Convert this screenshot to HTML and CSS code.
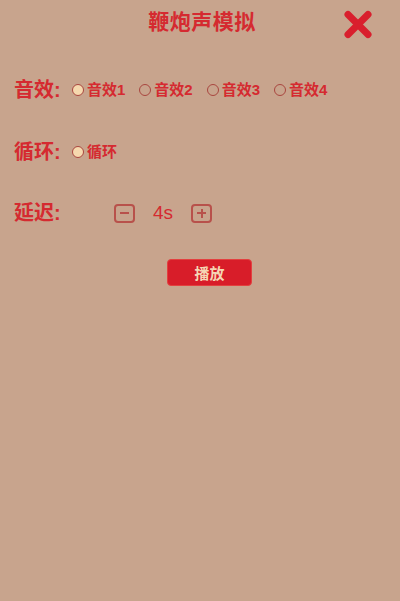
FILE: index.html
```html
<!DOCTYPE html>
<html lang="zh">
<head>
<meta charset="utf-8">
<title>鞭炮声模拟</title>
<link rel="stylesheet" href="styles.css">
</head>
<body>
<div class="page">
  <header class="header">
    <span class="spacer"></span>
    <h1 class="title">鞭炮声模拟</h1>
    <button class="close" aria-label="关闭">
      <svg width="30" height="29" viewBox="0 0 30 29"><path d="M5 4.5 L25 24.5 M25 4.5 L5 24.5" stroke="#d91f2d" stroke-width="7" stroke-linecap="round" fill="none"/></svg>
    </button>
  </header>

  <div class="row row-sound">
    <span class="label">音效:</span>
    <div class="options">
      <label class="opt"><span class="radio on"></span><span class="opt-text">音效1</span></label>
      <label class="opt"><span class="radio"></span><span class="opt-text">音效2</span></label>
      <label class="opt"><span class="radio"></span><span class="opt-text">音效3</span></label>
      <label class="opt"><span class="radio"></span><span class="opt-text">音效4</span></label>
    </div>
  </div>

  <div class="row row-loop">
    <span class="label">循环:</span>
    <div class="options">
      <label class="opt"><span class="radio on"></span><span class="opt-text">循环</span></label>
    </div>
  </div>

  <div class="row row-delay">
    <span class="label">延迟:</span>
    <div class="stepper">
      <span class="step-btn"><span class="bar"></span></span>
      <span class="value">4s</span>
      <span class="step-btn"><span class="bar"></span><span class="bar vert"></span></span>
    </div>
  </div>

  <button class="play">播放</button>
</div>
</body>
</html>
```

FILE: styles.css
```css
html, body {
  margin: 0;
  padding: 0;
}
body {
  background: #c8a48d;
  width: 400px;
  height: 601px;
  overflow: hidden;
  font-family: "Liberation Sans", "Noto Sans CJK SC", sans-serif;
  color: #d52a30;
}
.page {
  display: flex;
  flex-direction: column;
  padding: 0 0 0 14px;
}
.header {
  display: grid;
  grid-template-columns: 1fr auto 1fr;
  align-items: center;
  height: 48px;
  margin-left: -14px;
}
.title {
  margin: 0 0 4px 4px;
  font-size: 21px;
  font-weight: 700;
  line-height: 28px;
  color: #d52a30;
  letter-spacing: 0.5px;
}
.close {
  justify-self: end;
  margin-right: 27px;
  padding: 0;
  border: 0;
  background: none;
  width: 30px;
  height: 29px;
  display: flex;
}
.row {
  display: flex;
  align-items: center;
  height: 24px;
}
.row-sound { margin-top: 30px; }
.row-loop { margin-top: 38px; }
.row-delay { margin-top: 37px; }
.label {
  font-size: 20px;
  font-weight: 700;
  line-height: 24px;
  width: 58px;
  flex-shrink: 0;
}
.options {
  display: flex;
  align-items: center;
  gap: 14px;
}
.opt {
  display: flex;
  align-items: center;
  gap: 3px;
}
.radio {
  flex-shrink: 0;
  box-sizing: border-box;
  width: 12px;
  height: 12px;
  border: 1.6px solid #a9463f;
  border-radius: 50%;
  background: transparent;
  margin-top: -1px;
}
.radio.on {
  background: #f6d8ae;
}
.opt-text {
  font-size: 15px;
  font-weight: 700;
  line-height: 20px;
  color: #d52a30;
}
.stepper {
  display: flex;
  align-items: center;
  gap: 14px;
  margin-left: 42px;
}
.step-btn {
  position: relative;
  flex-shrink: 0;
  width: 17px;
  height: 15px;
  border: 2px solid #b8514b;
  border-radius: 4px;
  display: flex;
  align-items: center;
  justify-content: center;
}
.bar {
  width: 9px;
  height: 2px;
  background: #b8514b;
}
.bar.vert {
  position: absolute;
  width: 2px;
  height: 9px;
}
.value {
  font-size: 19px;
  font-weight: 400;
  line-height: 24px;
  width: 28px;
  text-align: center;
}
.play {
  align-self: flex-start;
  margin: 34px 0 0 153px;
  width: 85px;
  height: 27px;
  border: 1px solid #e3403f;
  border-radius: 4px;
  background: #d81d29;
  color: #f5d6b4;
  font-family: "Noto Sans CJK SC", sans-serif;
  font-size: 15px;
  font-weight: 700;
  padding: 0;
  line-height: 25px;
}
```
